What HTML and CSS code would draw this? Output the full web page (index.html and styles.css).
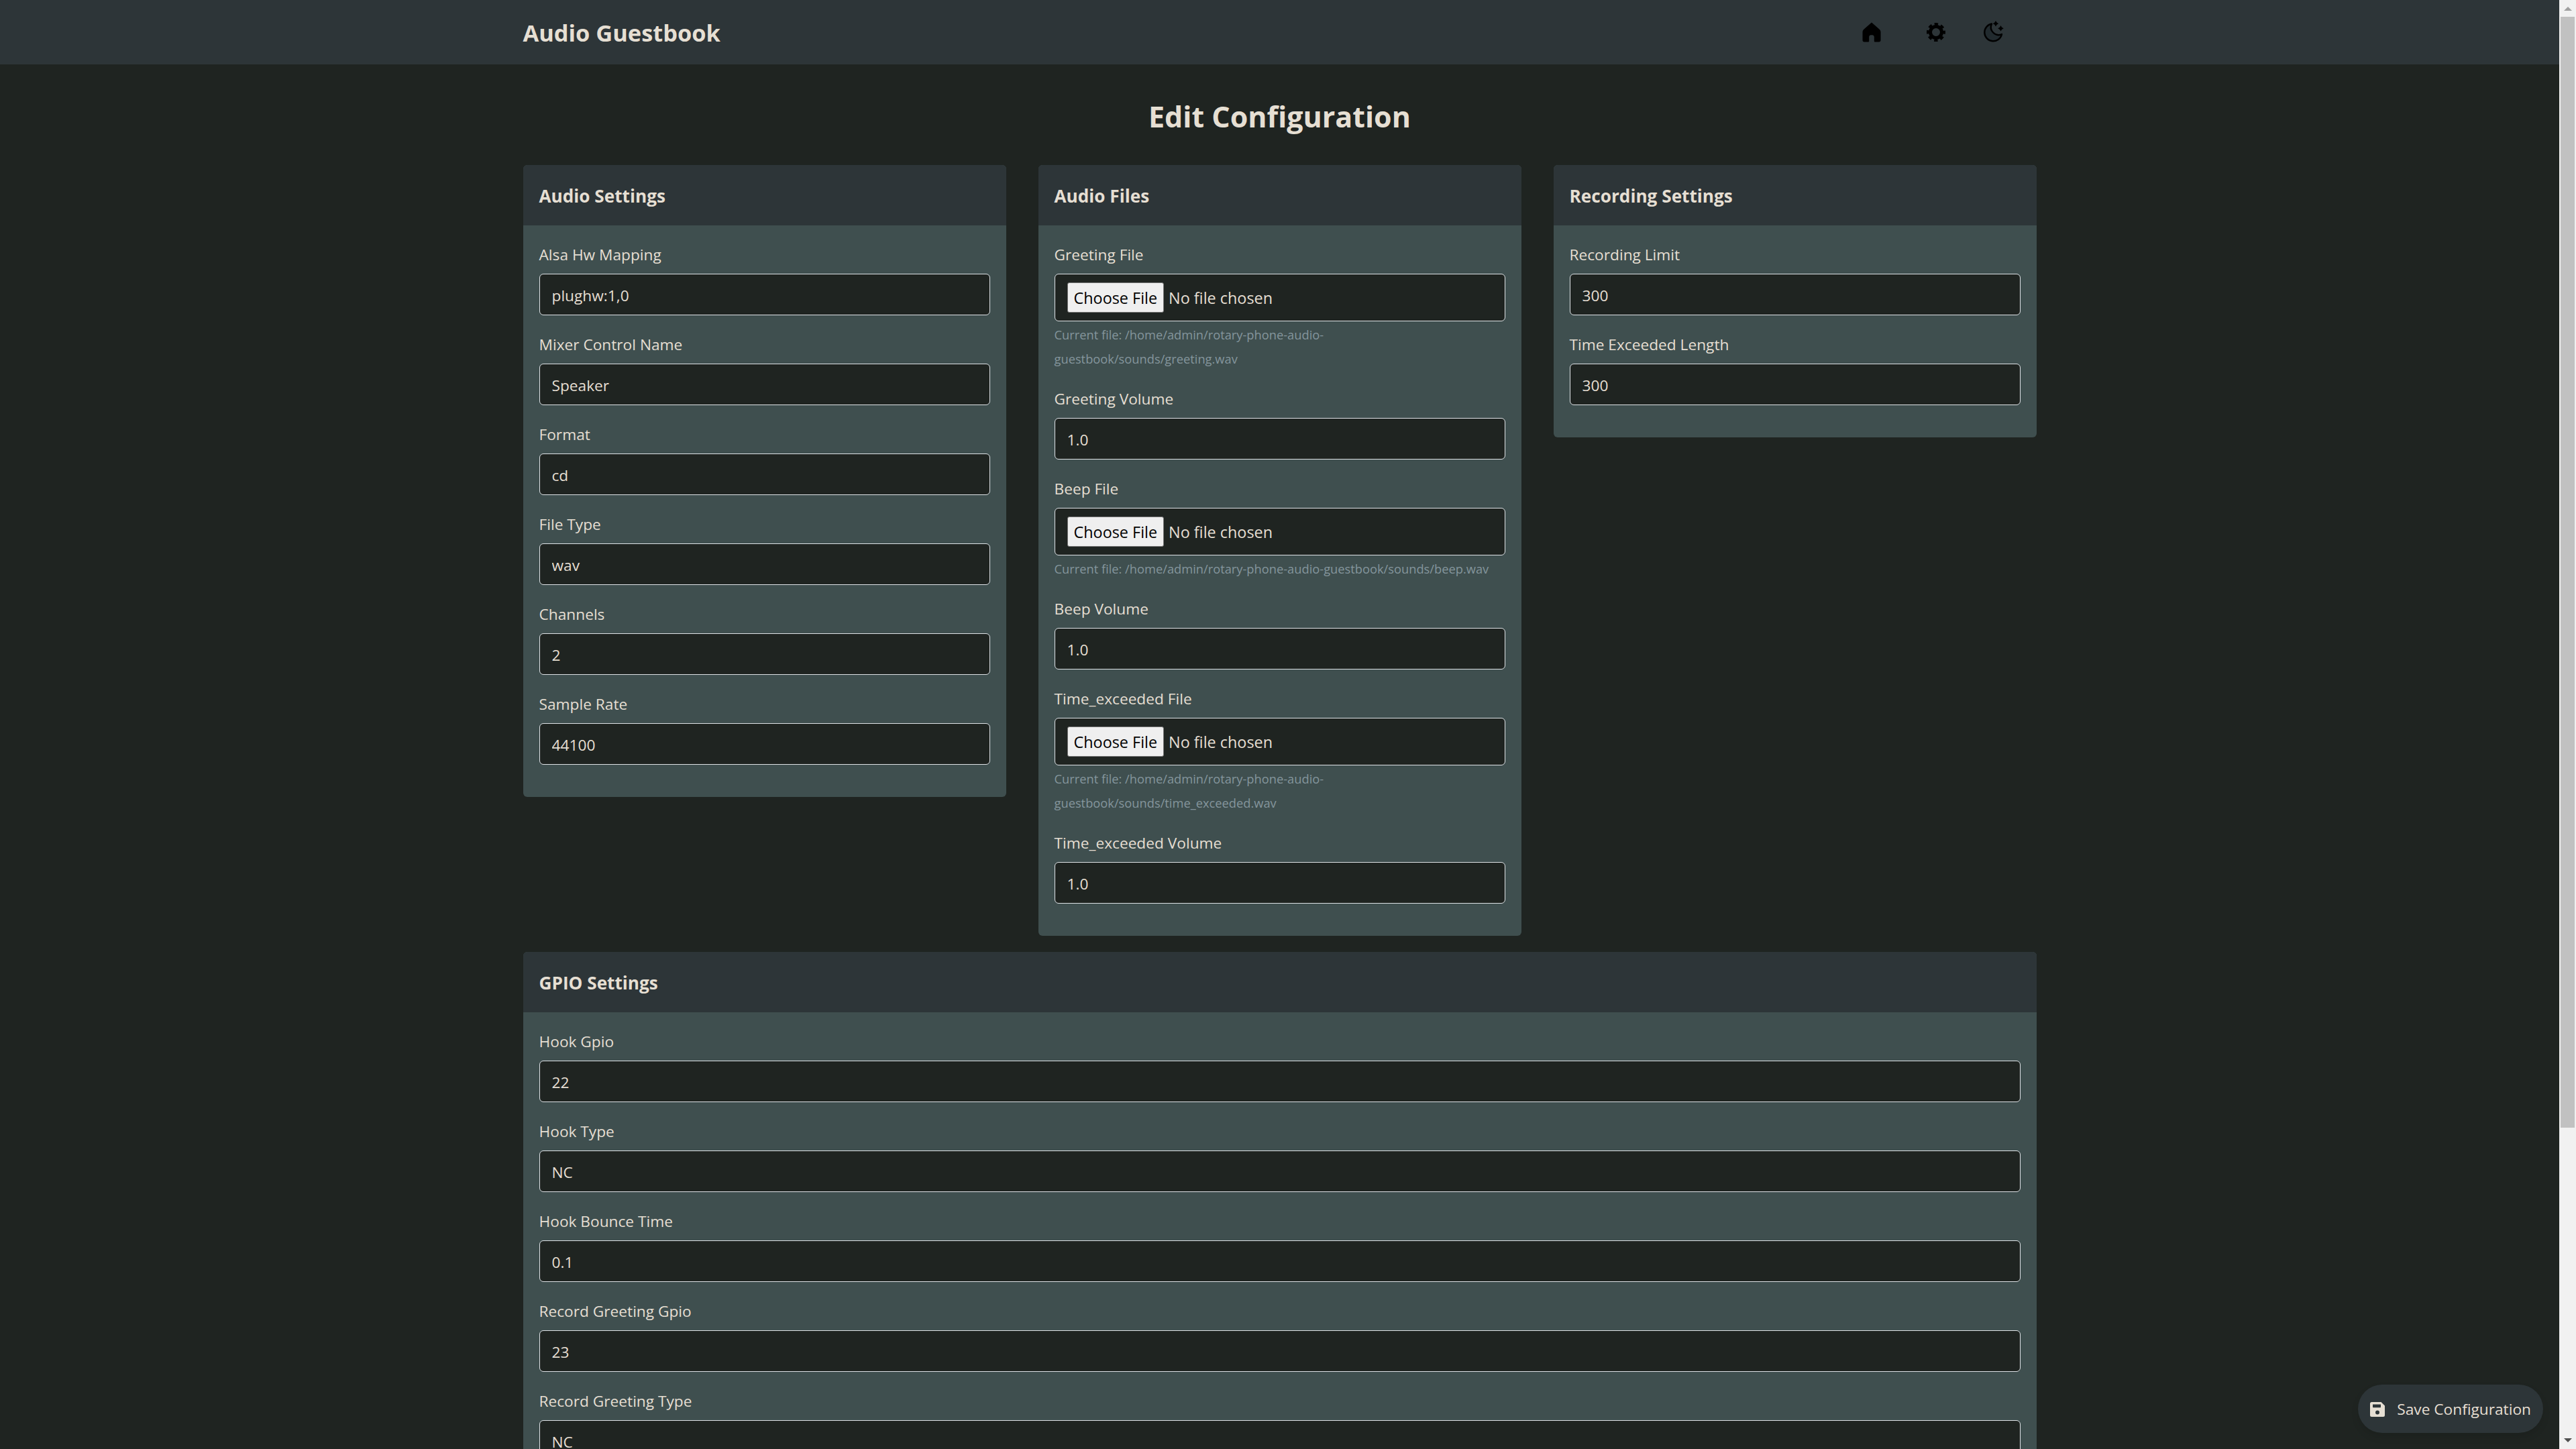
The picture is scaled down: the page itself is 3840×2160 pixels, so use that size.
FILE: index.html
```html
<!DOCTYPE html>
<html lang="en">
<head>
    <meta charset="UTF-8">
    <title>Audio Guestbook</title>
    <link rel="stylesheet" href="styles.css">
</head>
<body>
    <div class="viewport">
        <nav class="navbar">
            <div class="container navbar-inner">
                <a class="brand" href="#">Audio Guestbook</a>
                <div class="nav-icons">
                    <svg class="nav-icon icon-home" viewBox="0 0 28 30"><path d="M14 .5 2.600 10.500C1.200 11.800.5 13 .5 15v12c0 1.500 1 2.500 2.500 2.500h5.800c.8 0 1.400-.5 1.400-1.300V22c0-1.500 1.200-2.700 2.700-2.700h2.200c1.500 0 2.700 1.200 2.700 2.700v6.200c0 .8.600 1.300 1.400 1.300H25c1.500 0 2.500-1 2.500-2.500V15c0-2-.7-3.200-2.100-4.500z" fill="#000"/></svg>
                    <svg class="nav-icon icon-gear" viewBox="0 0 28 28"><circle cx="14" cy="14" r="8.500" fill="none" stroke="#000" stroke-width="5"/><circle cx="14" cy="14" r="11.800" fill="none" stroke="#000" stroke-width="4.400" stroke-dasharray="5.200 4.066" stroke-dashoffset="2.600"/></svg>
                    <svg class="nav-icon icon-moon" viewBox="0 0 32 32"><path d="M14 4.500A13 13 0 1 0 29 20 11.500 11.500 0 0 1 14 4.500z" fill="#212a2e" stroke="#000" stroke-width="2.400" stroke-linejoin="round"/><path d="M20 0l1.600 2.600 2.600 1.600-2.600 1.600-1.600 2.600-1.600-2.600-2.600-1.600 2.600-1.600zM27.500 7l1.600 2.700 2.700 1.600-2.700 1.600-1.600 2.700-1.600-2.700-2.700-1.600 2.700-1.600z" fill="#000"/></svg>
                </div>
            </div>
        </nav>

        <main class="container">
            <h1 class="page-title">Edit Configuration</h1>
            <form>
                <div class="row-three">
                    <section class="card">
                        <h2 class="card-header">Audio Settings</h2>
                        <div class="card-body">
                            <div class="group"><label>Alsa Hw Mapping</label><input type="text" value="plughw:1,0"></div>
                            <div class="group"><label>Mixer Control Name</label><input type="text" value="Speaker"></div>
                            <div class="group"><label>Format</label><input type="text" value="cd"></div>
                            <div class="group"><label>File Type</label><input type="text" value="wav"></div>
                            <div class="group"><label>Channels</label><input type="text" value="2"></div>
                            <div class="group"><label>Sample Rate</label><input type="text" value="44100"></div>
                        </div>
                    </section>
                    <section class="card">
                        <h2 class="card-header">Audio Files</h2>
                        <div class="card-body">
                            <div class="group">
                                <label>Greeting File</label><input type="file">
                                <div class="current"><small>Current file: /home/admin/rotary-phone-audio-guestbook/sounds/greeting.wav</small></div>
                            </div>
                            <div class="group"><label>Greeting Volume</label><input type="text" value="1.0"></div>
                            <div class="group">
                                <label>Beep File</label><input type="file">
                                <div class="current"><small>Current file: /home/admin/rotary-phone-audio-guestbook/sounds/beep.wav</small></div>
                            </div>
                            <div class="group"><label>Beep Volume</label><input type="text" value="1.0"></div>
                            <div class="group">
                                <label>Time_exceeded File</label><input type="file">
                                <div class="current"><small>Current file: /home/admin/rotary-phone-audio-guestbook/sounds/time_exceeded.wav</small></div>
                            </div>
                            <div class="group"><label>Time_exceeded Volume</label><input type="text" value="1.0"></div>
                        </div>
                    </section>
                    <section class="card">
                        <h2 class="card-header">Recording Settings</h2>
                        <div class="card-body">
                            <div class="group"><label>Recording Limit</label><input type="text" value="300"></div>
                            <div class="group"><label>Time Exceeded Length</label><input type="text" value="300"></div>
                        </div>
                    </section>
                </div>
                <section class="card">
                    <h2 class="card-header">GPIO Settings</h2>
                    <div class="card-body">
                        <div class="group"><label>Hook Gpio</label><input type="text" value="22"></div>
                        <div class="group"><label>Hook Type</label><input type="text" value="NC"></div>
                        <div class="group"><label>Hook Bounce Time</label><input type="text" value="0.1"></div>
                        <div class="group"><label>Record Greeting Gpio</label><input type="text" value="23"></div>
                        <div class="group"><label>Record Greeting Type</label><input type="text" value="NC"></div>
                    </div>
                </section>
            </form>
        </main>

        <button class="save-btn" type="button">
            <svg class="save-icon" viewBox="0 0 22 22"><path fill-rule="evenodd" fill="#e6dfd3" d="M2.500 0h14L22 5.500v14a2.500 2.500 0 0 1-2.500 2.500h-17A2.500 2.500 0 0 1 0 19.500v-17A2.500 2.500 0 0 1 2.500 0zM4 3.500v4c0 .5.300.8.800.8h10.400c.5 0 .8-.3.800-.8v-4zM11 12.500a3 3 0 1 0 0 6 3 3 0 0 0 0-6z"/></svg>
            Save Configuration
        </button>
    </div>

    <div class="scrollbar">
        <span class="arrow-up"></span>
        <div class="thumb"></div>
        <span class="arrow-down"></span>
    </div>
</body>
</html>
```

FILE: styles.css
```css
* {
    box-sizing: border-box;
}

html, body {
    height: 100%;
    margin: 0;
    overflow: hidden;
}

body {
    display: flex;
    font-family: "Open Sans", "Noto Sans", sans-serif;
    font-size: 22.7px;
    line-height: 36px;
    background-color: #1f2421;
    color: #e6dfd3;
}

.viewport {
    flex: 1;
    min-width: 0;
    height: 100%;
    overflow: hidden;
    position: relative;
}

.container {
    width: 2256px;
    margin: 0 auto;
}

.navbar {
    height: 96px;
    background-color: #2d3538;
}

.navbar-inner {
    display: flex;
    align-items: center;
    justify-content: space-between;
    height: 100%;
}

.brand {
    color: #e6dfd3;
    font-size: 34.4px;
    font-weight: 700;
    text-decoration: none;
    padding-top: 2px;
}

.nav-icons {
    display: flex;
    align-items: center;
    margin-right: 49px;
    height: 100%;
}

.nav-icon {
    display: block;
}

.icon-home {
    width: 28px;
    height: 30px;
    margin-bottom: 1px;
}

.icon-gear {
    width: 28px;
    height: 28px;
    margin-left: 68px;
}

.icon-moon {
    width: 32px;
    height: 32px;
    margin-left: 55px;
    margin-bottom: 2px;
}

.page-title {
    margin: 0;
    padding: 51px 0 45px;
    font-size: 43px;
    line-height: 54px;
    font-weight: 700;
    text-align: center;
}

.row-three {
    display: grid;
    grid-template-columns: repeat(3, 720px);
    justify-content: space-between;
    align-items: start;
}

.card {
    background-color: #3f4f4f;
    border-radius: 6px;
    margin-bottom: 24px;
    overflow: hidden;
}

.card-header {
    margin: 0;
    height: 90px;
    padding: 2px 24px 0;
    display: flex;
    align-items: center;
    background-color: #2d3538;
    font-size: 26.2px;
    font-weight: 700;
}

.card-body {
    padding: 24px;
}

.group {
    margin-bottom: 24px;
}

.group label {
    display: block;
    margin-bottom: 12px;
    height: 36px;
    padding-top: 2px;
}

.group input {
    display: block;
    width: 100%;
    height: 62px;
    padding: 13px 18px 11px;
    background-color: #1f2421;
    color: #e6dfd3;
    border: 1px solid #dee2e6;
    border-radius: 6px;
    font: inherit;
}

.group input[type="file"] {
    height: 71px;
    padding: 12px 18px;
    font-size: 23.4px;
}

.group input[type="file"]::file-selector-button {
    height: 45px;
    padding: 0 9px;
    margin-right: 7px;
    background-color: #efefef;
    color: #000;
    border: 1px solid #767676;
    border-radius: 3px;
    font: inherit;
}

.current {
    color: #84959c;
    height: auto;
}

.current small {
    font-size: 18.3px;
    line-height: 20px;
    vertical-align: -1px;
}

.save-btn {
    position: absolute;
    right: 24px;
    bottom: 24px;
    display: flex;
    align-items: center;
    gap: 18px;
    height: 72px;
    padding: 2px 18px 0;
    border: none;
    border-radius: 36px;
    background-color: #2d3538;
    color: #e6dfd3;
    font: inherit;
    box-shadow: 0 6px 12px rgba(0, 0, 0, 0.1);
}

.save-icon {
    width: 22px;
    height: 22px;
}

.scrollbar {
    width: 25px;
    flex: none;
    height: 100%;
    background-color: #f1f1f1;
    position: relative;
}

.thumb {
    position: absolute;
    top: 25px;
    left: 2px;
    width: 21px;
    height: 1656px;
    background-color: #c1c1c1;
}

.arrow-up, .arrow-down {
    position: absolute;
    left: 7px;
    width: 0;
    height: 0;
    border-left: 6px solid transparent;
    border-right: 6px solid transparent;
}

.arrow-up {
    top: 10px;
    border-bottom: 6px solid #a0a0a0;
}

.arrow-down {
    bottom: 10px;
    border-top: 6px solid #505050;
}
```
